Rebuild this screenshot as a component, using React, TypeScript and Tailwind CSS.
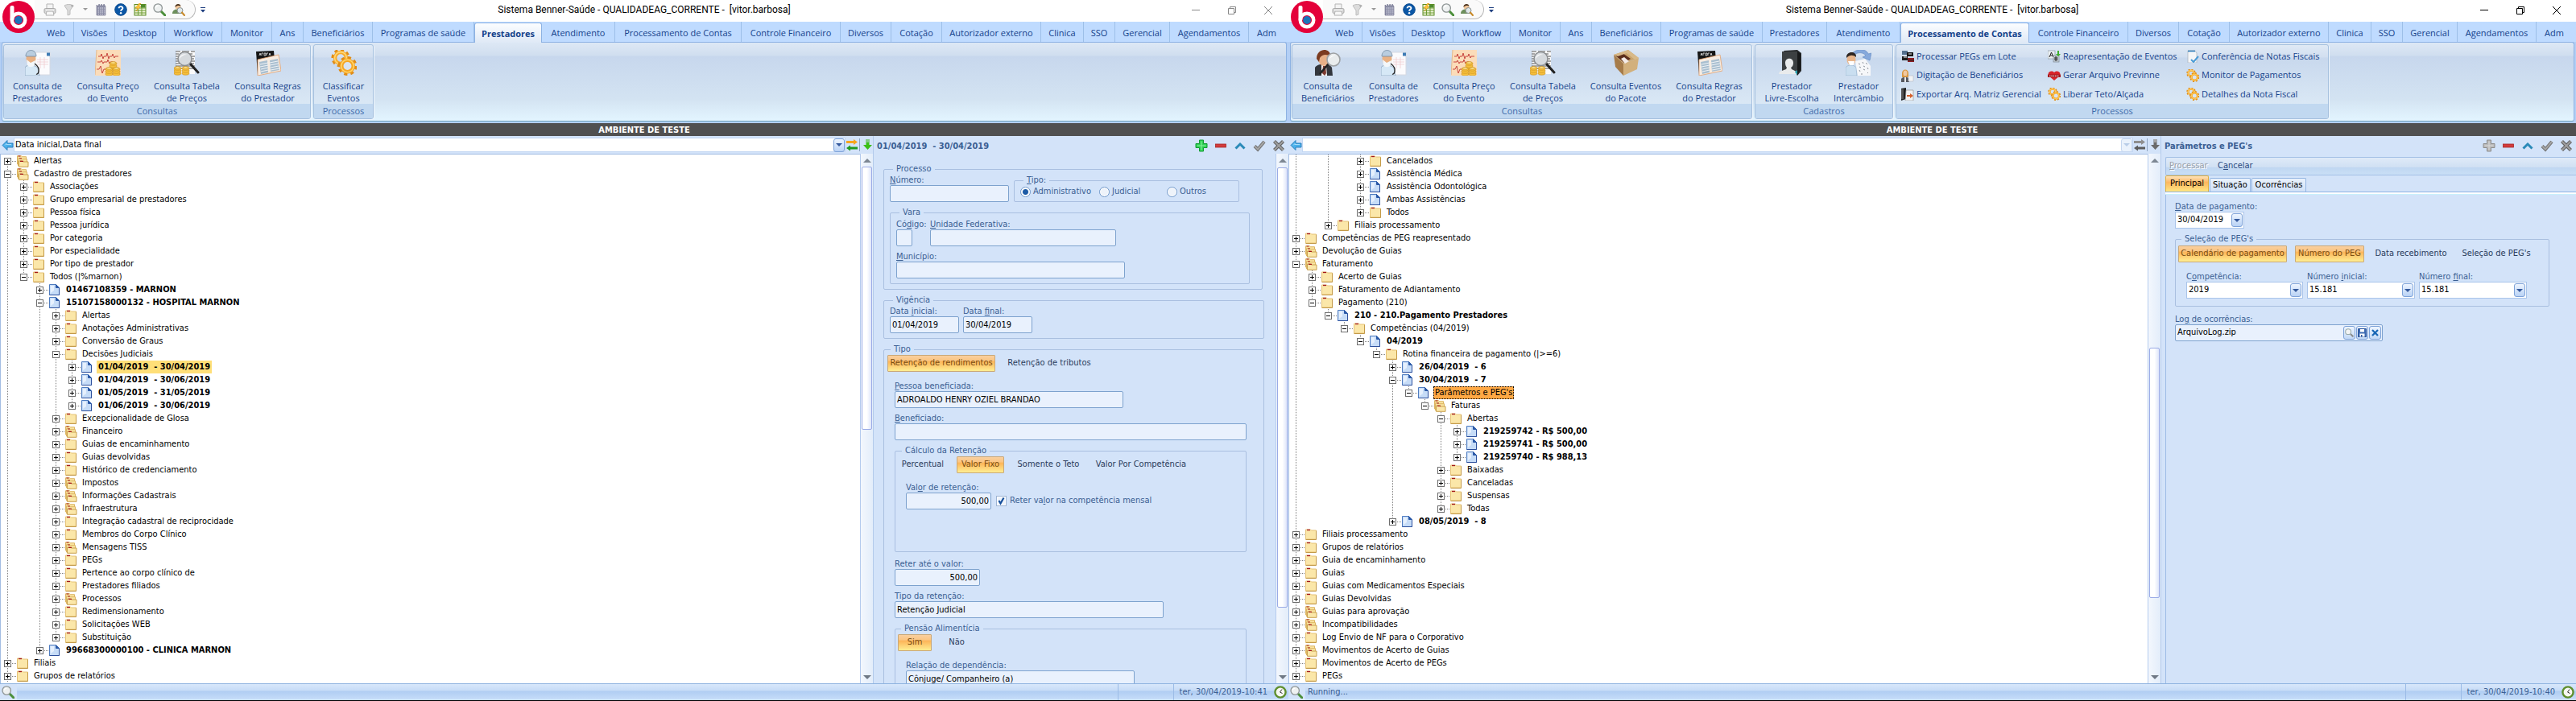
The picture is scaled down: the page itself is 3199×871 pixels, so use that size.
import { useId, type ReactNode } from "react";

const RIBBON_BG =
  "bg-[linear-gradient(to_bottom,#dde8f5_0px,#d0deef_16px,#c7d7ed_17px,#d3e3f2_70px,#e3f5ff_100%)]";
const GROUP_BG =
  "bg-[linear-gradient(to_bottom,#dfe9f5_0px,#d2dff0_15px,#c8d8ed_16px,#dae8f5_74px)]";
const TAHOMA = "font-['DejaVu_Sans_Condensed','DejaVu_Sans',sans-serif]";
const SEGOE = "font-['Open_Sans','Noto_Sans',sans-serif]";

/* ---------- small helpers ---------- */

/* "&" marks the access key of a caption */
function Caption({ text }: { text: string }) {
  const i = text.indexOf("&");
  if (i < 0) return <>{text}</>;
  return (
    <>
      {text.slice(0, i)}
      <u>{text[i + 1]}</u>
      {text.slice(i + 2)}
    </>
  );
}

function Svg({ size = 16, w, h, box, children }: { size?: number; w?: number; h?: number; box?: string; children: ReactNode }) {
  return (
    <svg width={w ?? size} height={h ?? size} viewBox={box ?? `0 0 ${w ?? size} ${h ?? size}`} className="block shrink-0" aria-hidden="true">
      {children}
    </svg>
  );
}

/* ---------- icons ---------- */

function Logo() {
  return (
    <Svg size={40}>
      <circle cx="20" cy="20" r="20" fill="#e4003a" />
      <rect x="9.5" y="6" width="5" height="19" rx="2" fill="#fff" />
      <circle cx="20" cy="24" r="8.3" fill="none" stroke="#fff" strokeWidth="4.4" />
      <circle cx="20" cy="24" r="4.9" fill="#1b74b8" />
    </Svg>
  );
}

const Printer = () => (
  <Svg>
    <path d="M4 7V1h8v6" fill="#f4f4f4" stroke="#b5b5b5" />
    <rect x="1" y="6.5" width="14" height="6" rx="1.5" fill="#d9d9d9" stroke="#aaa" />
    <path d="M4 10h8l1 5H3z" fill="#f7f7f7" stroke="#b0b0b0" />
    <path d="M3 8.5h10" stroke="#fff" />
  </Svg>
);
const Funnel = () => (
  <Svg>
    <path d="M2 3c3-2 8-2 11 0l-4 6v5l-3 1V9z" fill="#dcdcdc" stroke="#bdbdbd" />
    <path d="M10 2l4 1-3 2z" fill="#a9a9a9" />
  </Svg>
);
const Building = () => (
  <Svg>
    <path d="M2 15V2l2 2 1-3 2 3 1-3 2 3 1-3 2 3v11z" fill="#8d8fa8" stroke="#6b6d88" strokeWidth=".6" />
    <path d="M3.5 6h9M3.5 8.5h9M3.5 11h9M3.5 13.5h9" stroke="#dcdde8" strokeDasharray="1.5 1" />
  </Svg>
);
const Help = () => (
  <Svg>
    <circle cx="8" cy="8" r="7.3" fill="#0b57a6" stroke="#0a4a8e" />
    <path d="M5.6 6.3C5.7 3.4 10.6 3.5 10.4 6.2 10.3 7.9 8.1 7.8 8.1 9.8" fill="none" stroke="#fff" strokeWidth="1.9" />
    <circle cx="8.1" cy="12.2" r="1.2" fill="#fff" />
  </Svg>
);
const Sheet = () => (
  <Svg>
    <rect x="1" y="1.5" width="14" height="13.5" fill="#eef5d8" stroke="#5b8a22" />
    <path d="M1 6h14M1 9h14M1 12h14M5.5 2v13M10 2v13" stroke="#6d9a33" />
    <rect x="9" y="2" width="5.5" height="3.5" fill="#4e8b2d" />
    <path d="M7 0L2 6h3L3 10l6-6H6l3-4z" fill="#ffc83a" stroke="#d58a10" strokeWidth=".5" />
  </Svg>
);
const Magnifier = () => (
  <Svg>
    <path d="M10 10l5 5" stroke="#4c8f3a" strokeWidth="3" strokeLinecap="round" />
    <circle cx="6.2" cy="6" r="5.2" fill="#eef1f1" stroke="#8e9494" strokeWidth="1.3" />
    <path d="M3.5 5.5c.3-1.7 1.5-2.4 3-2.3" stroke="#fff" fill="none" strokeWidth="1.2" />
  </Svg>
);
const UserSearch = () => (
  <Svg>
    <path d="M0 13c0-4 3-5.5 6-5.5s6 1.5 6 5.5z" fill="#6d8f5c" />
    <circle cx="7" cy="4.5" r="3.3" fill="#f2c79a" />
    <path d="M3.5 5C3 0 10.5-.5 10.5 4 9 2.5 6 2.5 3.5 5z" fill="#4a3320" />
    <circle cx="9.5" cy="9" r="3.5" fill="#dfe8ea" stroke="#8a8f8f" />
    <path d="M12 11.5l3 3.5" stroke="#c98a2a" strokeWidth="2" strokeLinecap="round" />
  </Svg>
);

const Coins = ({ x, y }: { x: number; y: number }) => (
  <g transform={`translate(${x} ${y})`} stroke="#c98f1d" strokeWidth=".6">
    {[9, 6, 3].map((v) => (
      <ellipse key={v} cx="4.5" cy={v} rx="4.5" ry="2.2" fill="#f6bf3c" />
    ))}
    <ellipse cx="4.5" cy="2" rx="3.3" ry="1.3" fill="#fde28a" />
  </g>
);
const Doctor = () => (
  <Svg size={32}>
    <rect x="12" y="3" width="19" height="28" fill="#fbfbfd" stroke="#d5d9e2" />
    <path d="M15 12h14M15 15h14M15 18h14M19 9v14M24 9v14" stroke="#efc9cc" strokeWidth=".7" />
    <rect x="27" y="3.5" width="4" height="4" fill="#3f7bb5" />
    <path d="M0 32V22c1-4 14-4 16 1l2 9z" fill="#d6e8f6" stroke="#7f99b4" strokeWidth=".7" />
    <ellipse cx="7.5" cy="11" rx="6" ry="8" fill="#e9b183" />
    <path d="M1 8C1-2 14-2 14 8z" fill="#b9cddf" stroke="#6a829b" strokeWidth=".7" />
    <path d="M2 12l5 4 6-3-1 6c-3 3-7 3-9 0z" fill="#f3f7fa" />
    <path d="M12 17c4 3 6 6 5 10-1 4-3 3-3 3" fill="none" stroke="#222" strokeWidth="1.3" />
  </Svg>
);
const Ecg = () => (
  <Svg size={32}>
    <path d="M2 0h30v32H0z" fill="#fbdcb9" />
    <path d="M0 31L2 0" stroke="#e4b98c" />
    <path d="M4 8h3l1-3 2 6 1-3h3l1-4 2 7 1-3h3l1-3 2 5 1-2h4M3 15h4l1-2 2 4 1-2h4l1-3 2 5 1-2h3M2 24h3l2-4 2 9 2-5h5" fill="none" stroke="#c8463f" />
    <Coins x={18} y={14} />
    <Coins x={13} y={21} />
    <Coins x={22} y={21} />
  </Svg>
);
const PriceTable = () => (
  <Svg size={32}>
    <rect x="3" y="1" width="23" height="29" fill="#fafafa" />
    <path d="M2 2h6m2 0h9m2 0h5M2 5h4m3 0h14M2 8h7m2 0h15M2 11h5m2 0h16M2 14h8m2 0h14M2 17h5m2 0h16M2 20h24M2 23h24" stroke="#555" strokeWidth="1" />
    <path d="M20 17l10 11" stroke="#222" strokeWidth="3" strokeLinecap="round" />
    <circle cx="13.5" cy="11" r="8.5" fill="#d6dade" stroke="#8a8d90" strokeWidth="1.5" />
    <path d="M7 11c0-5 6-7 9-5-4 0-7 2-9 5z" fill="#f5f6f7" />
    <Coins x={0} y={20} />
    <Coins x={10} y={20} />
  </Svg>
);
const Rules = () => (
  <Svg size={32}>
    <path d="M1 2l22-1 2 24-22 6z" fill="#151515" />
    <path d="M5 7l1-3 1 3M8 7V4h2M11 7V4h2v3zM14 7V4h2M17 7l1-3 1 3" stroke="#eee" fill="none" strokeWidth=".8" />
    <path d="M3 12l26-6 3 20-29 6z" fill="#f7ece1" stroke="#e2a06c" strokeWidth=".8" />
    <path d="M5 15l10-2 1 15-9 2zM18 13l10-2 2 14-11 2z" fill="#a9bfd0" />
    <path d="M6 18l10-2M6 21l10-2M7 24l9-2M7 27l9-2M18 16l10-2M18 19l11-2M19 22l10-2M19 25l11-2" stroke="#fff" strokeWidth=".8" />
  </Svg>
);
const Gears = ({ size = 32 }: { size?: number }) => (
  <Svg size={size} box="0 0 32 32">
    <circle cx="12" cy="10" r="9.5" fill="none" stroke="#e08c17" strokeWidth="4" strokeDasharray="4 3.4" />
    <circle cx="12" cy="10" r="7" fill="none" stroke="#f6ab2e" strokeWidth="4.5" />
    <circle cx="12" cy="10" r="7.4" fill="none" stroke="#ffd774" strokeWidth="1.6" />
    <circle cx="20.5" cy="20" r="10" fill="none" stroke="#e08c17" strokeWidth="4" strokeDasharray="4 3.85" />
    <circle cx="20.5" cy="20" r="7.3" fill="#d9e4f1" stroke="#f6a623" strokeWidth="4.5" />
    <circle cx="20.5" cy="20" r="7.7" fill="none" stroke="#ffd46a" strokeWidth="1.6" />
  </Svg>
);
const Beneficiary = () => (
  <Svg size={32}>
    <path d="M0 32V22c2-5 18-6 21 0l1 10z" fill="#33363c" />
    <path d="M8 19h6l1 13H8z" fill="#f5f5f5" />
    <path d="M10 20h3l1 9-2 3-3-3z" fill="#7d3a30" />
    <ellipse cx="11" cy="11" rx="7" ry="9" fill="#e7b088" />
    <path d="M2 11C2-3 20-3 19 8c-4-3-10-3-13 2l-1 5z" fill="#7b3b20" />
    <path d="M6 30l11-13" stroke="#222" strokeWidth="2.5" />
    <circle cx="23" cy="12" r="8" fill="#e9eced" stroke="#9da1a4" strokeWidth="1.6" />
    <path d="M18 11c1-4 5-5 8-4-3 0-6 2-8 4z" fill="#fff" />
  </Svg>
);
const BoxIcon = () => (
  <Svg size={32}>
    <path d="M1 6L19 0l13 10-19 7z" fill="#c9a36b" />
    <path d="M1 6l12 11v15L3 21z" fill="#a67c4a" />
    <path d="M13 17l19-7-2 14-17 8z" fill="#d2b07c" />
    <path d="M3 7l9-3 10 7-8 5z" fill="#5d2f1c" />
    <path d="M10 11l4-2 6 5-5 3z" fill="#f4ebe6" />
    <path d="M1 6L19 0l13 10-5 2L17 4 6 8z" fill="#d8b988" />
  </Svg>
);
const DarkFolder = () => (
  <Svg size={32}>
    <path d="M6 1l17-1 5 4v22l-5 6z" fill="#26292b" />
    <path d="M4 2h19v24H4z" fill="#3c4042" />
    <path d="M23 2l4 3v19l-4 7z" fill="#17191a" />
    <path d="M8 16c0-7 10-7 10 0 0 3-1 5-3 6l1 2 6 3v3H0l1-3 8-3 1-2c-1-1-2-3-2-6z" fill="#e9ebec" />
    <path d="M20 27l3-2v6l-2-2z" fill="#2a9fb0" />
  </Svg>
);
const Exchange = () => (
  <Svg size={32}>
    <path d="M6 7C12-3 26-2 28 5l4-1-2 9-9-4 4-2c-3-4-10-5-15 0z" fill="#86a9dc" stroke="#5f86c0" strokeWidth=".6" />
    <path d="M0 32V22c2-4 11-4 13 0l1 10z" fill="#c9def0" stroke="#8eacc8" strokeWidth=".6" />
    <ellipse cx="7" cy="12" rx="5.5" ry="7" fill="#e8b58c" />
    <path d="M1 10C0 1 14 1 13 9 9 6 5 6 1 10z" fill="#2d2522" />
    <path d="M3 14h8l-1 5H5z" fill="#fff" />
    <path d="M12 14l12-3 7 9v12H15z" fill="#f6f7f9" />
    <path d="M16 17l2 1m3-3l1 2m3-1l2 2m-10 3l2 1m3-2l2 1m3 1l1 2m-11 1l1 2m4-3l2 1m3 3l1 1m-9 1l2 0" stroke="#8d939c" />
  </Svg>
);
const Docs = () => (
  <Svg>
    <path d="M1 1h7v5H1z" fill="#54708e" />
    <path d="M7 3h8v5H7z" fill="#151515" />
    <path d="M1 8h7v5H1z" fill="#1d1d1d" />
    <path d="M3 9h4M9 5h4" stroke="#eee" />
    <path d="M8 10h8v5H8z" fill="#8c1f23" />
    <path d="M8 13h8" stroke="#222" />
  </Svg>
);
const Clerk = () => (
  <Svg>
    <path d="M1 5C1-1 9-1 9 5v5H1z" fill="#d9963e" />
    <ellipse cx="5" cy="5" rx="2.5" ry="3.5" fill="#f0c8a0" />
    <path d="M0 16v-4c2-3 8-3 10 0v4z" fill="#55585f" />
    <path d="M4 10h2v6H4z" fill="#e8e8ea" />
    <path d="M9 8h6v7H9z" fill="#f2f3f5" stroke="#b9bcc2" strokeWidth=".6" />
  </Svg>
);
const ExportIcon = () => (
  <Svg>
    <path d="M0 1l6-1v14l-6 2z" fill="#222" />
    <path d="M6 3h9v13H5z" fill="#f3f3f3" stroke="#888" strokeWidth=".6" />
    <path d="M0 2h3v12H0z" fill="#555" />
    <path d="M7 9h4V7l4 3-4 3v-2H7z" fill="#d5602b" />
  </Svg>
);
const Translate = () => (
  <Svg>
    <rect x="0" y="1" width="9" height="10" fill="#e9eef2" stroke="#7f8c98" strokeWidth=".6" />
    <path d="M2 9l2.5-6L7 9M3 7h3" stroke="#222" fill="none" />
    <rect x="7" y="7" width="7" height="8" fill="#c9d2da" stroke="#6b7884" strokeWidth=".6" />
    <path d="M9 9h2.5v4H9zM9 11h3" stroke="#222" fill="none" />
    <path d="M12 1h2v4h2l-3 3-3-3h2z" fill="#3fae29" />
  </Svg>
);
const Heart = () => (
  <Svg>
    <path d="M8 14L1 8C-1 3 5 1 8 4c3-3 9-1 7 4z" fill="#d8232a" />
    <path d="M0 6.5h16v3.5H0z" fill="#a3171d" />
    <path d="M2 8.3h12" stroke="#fff" strokeDasharray="1.5 .8" />
  </Svg>
);
const DocCheck = () => (
  <Svg>
    <path d="M2 1h9l2 3v12H2z" fill="#f4f6f8" stroke="#a9b2bb" strokeWidth=".7" />
    <path d="M2 1.5h9" stroke="#2a7ab8" strokeWidth="1.6" />
    <path d="M6 12l3 3 6-7" stroke="#4a9bd6" strokeWidth="2" fill="none" />
  </Svg>
);

const Folder = () => (
  <Svg w={15} h={14}>
    <path d="M.5 3V1h6l1 1h6v11H.5z" fill="#fbe7a9" stroke="#e6c377" />
    <path d="M2 1.5h4" stroke="#a3161b" strokeWidth="1.3" />
    <path d="M13.5 2.5v11H.5" stroke="#c39a49" fill="none" />
  </Svg>
);
const Folders = () => (
  <Svg w={15} h={15}>
    <path d="M.5 11V.7h5l1 1h5V11z" fill="#f9e3a0" stroke="#dcb562" />
    <path d="M1.5 13V3.7h4l1 1h6V13z" fill="#f9e3a0" stroke="#dcb562" />
    <path d="M2.5 14.3V7h4l1 1h6.5v6.3z" fill="#fbe7a9" stroke="#c9a14e" />
    <path d="M1.5 1h3M3 4h3M4 7.400h4" stroke="#a3161b" strokeWidth="1.2" />
  </Svg>
);
const FileIcon = () => (
  <Svg w={14} h={14}>
    <path d="M.5.5h8l4 4v9H.5z" fill="#c6dcf7" stroke="#4f7cc0" />
    <path d="M8.5.5v4h4z" fill="#2c5aa8" stroke="#2c5aa8" />
    <path d="M12.5 5v8.500H.5" stroke="#2c4f9c" fill="none" />
    <path d="M2 2h4v6L2 11z" fill="#e6f0fd" />
  </Svg>
);
const BackArrow = () => (
  <Svg w={15} h={15}>
    <path d="M1 7.5l6-6v3.500h7v5H7v3.500z" fill="#4cb0ea" stroke="#2379b8" strokeWidth=".9" />
    <path d="M4 7.5l2-2v1h6" stroke="#a6dcfb" fill="none" />
  </Svg>
);
const Swap = ({ off }: { off?: boolean }) => (
  <Svg w={16} h={16}>
    <path d="M1 3h9V1l5 3.500L10 8V6H1z" fill={off ? "#8f8f8f" : "#f7a61c"} />
    <path d="M15 10.500H6v-2L1 12l5 3.500v-2h9z" fill={off ? "#5d5d5d" : "#1f9a1f"} />
  </Svg>
);
const DownArrow = ({ off }: { off?: boolean }) => (
  <Svg w={12} h={16}>
    <path d="M3.5 1h4v7H11l-5.500 6L0 8h3.500z" fill={off ? "#6b6b6b" : "#3bbf17"} />
    <path d="M4 1h3v4H4z" fill={off ? "#a5a5a5" : "#86c98a"} />
  </Svg>
);
const Plus = ({ off }: { off?: boolean }) => (
  <Svg>
    <path d="M5.5 1h5v4.500H15v5h-4.500V15h-5v-4.500H1v-5h4.500z" fill={off ? "#b9b9b9" : "#2fd153"} stroke={off ? "#8e8e8e" : "#139c35"} />
    <path d="M8 2.5v11M2.5 8h11" stroke={off ? "#d9d9d9" : "#8cf0a0"} />
  </Svg>
);
const Minus = () => (
  <Svg>
    <rect x="1.5" y="6" width="13" height="4" fill="#d33c3c" stroke="#a82626" strokeWidth=".8" />
  </Svg>
);
const Up = () => (
  <Svg>
    <path d="M2.5 11.5L8 6l5.500 5.500" fill="none" stroke="#2a8ab8" strokeWidth="3" />
  </Svg>
);
const Check = () => (
  <Svg>
    <path d="M2 8.5l4 4 8-9.500" fill="none" stroke="#6f6f6f" strokeWidth="4" />
    <path d="M2 8.5l4 4 8-9.500" fill="none" stroke="#a5a5a5" strokeWidth="2" />
  </Svg>
);
const Cross = () => (
  <Svg>
    <path d="M2.5 2.5l11 11M13.5 2.5l-11 11" stroke="#606060" strokeWidth="4.2" />
    <path d="M2.5 2.5l11 11M13.5 2.5l-11 11" stroke="#a0a0a0" strokeWidth="1.8" />
  </Svg>
);
const Clock = () => (
  <Svg w={16} h={16}>
    <circle cx="8" cy="8" r="6.6" fill="#f7f8f2" stroke="#5f8f2e" strokeWidth="2.4" />
    <path d="M10 4.5L7.5 8l3 1.500" stroke="#333" fill="none" />
  </Svg>
);
const Caret = ({ color }: { color: string }) => (
  <Svg w={8} h={4}>
    <path d="M0 0h8L4 4z" fill={color} />
  </Svg>
);

/* ---------- title bar, tabs, ribbon ---------- */

function TitleBar({ active }: { active: boolean }) {
  const ink = active ? "#000" : "#888";
  const tools: [string, ReactNode][] = [
    ["Planilha", <Sheet key="s" />],
    ["Pesquisar", <Magnifier key="m" />],
    ["Usuário", <UserSearch key="u" />],
  ];
  return (
    <header className="grid h-[27px] shrink-0 grid-cols-[1fr_auto_1fr] items-start bg-white">
      <div className="flex pl-[43px]">
        <div className="flex h-6 items-center gap-2 rounded-r-full border border-t-0 border-l-0 border-[#b9b9b9] bg-[#fafafa] pr-3 pl-[11px]">
          <button aria-label="Imprimir"><Printer /></button>
          <button aria-label="Filtrar"><Funnel /></button>
          <button aria-label="Mais filtros" className="flex w-2 justify-center"><Svg w={6} h={3}><path d="M0 0h6L3 3z" fill="#999" /></Svg></button>
          <button aria-label="Empresa"><Building /></button>
          <button aria-label="Ajuda"><Help /></button>
          {tools.map(([n, i]) => (
            <button key={n} aria-label={n}>{i}</button>
          ))}
        </div>
        <button aria-label="Personalizar" className="mt-2 ml-1.5 h-2">
          <Svg w={6} h={7}><path d="M0 .5h6" stroke="#1f3f80" /><path d="M0 3h6L3 6.500z" fill="#1f3f80" /></Svg>
        </button>
      </div>
      <h1 className="font-['Roboto',sans-serif] text-xs leading-6 whitespace-pre text-black">
        Sistema Benner-Saúde - QUALIDADEAG_CORRENTE -  [vitor.barbosa]
      </h1>
      <div className={`flex justify-end gap-[35px] pt-2 ${active ? "pr-[19px]" : "pr-5"}`}>
        <button aria-label="Minimizar"><Svg w={10} h={10}><path d="M0 4.500h10" stroke={ink} /></Svg></button>
        <button aria-label="Restaurar"><Svg w={10} h={10}><path d="M.5 2.500h7v7h-7zM2.500 2.500v-2h7v7h-2" fill="none" stroke={ink} /></Svg></button>
        <button aria-label="Fechar"><Svg w={10} h={10}><path d="M0 0l10 10M10 0L0 10" stroke={ink} /></Svg></button>
      </div>
    </header>
  );
}

const TABS: [string, string][] = [
  ["Web", "w-[44px]"],
  ["Visões", "w-[51px]"],
  ["Desktop", "w-[62px]"],
  ["Workflow", "w-[71px]"],
  ["Monitor", "w-[62px]"],
  ["Ans", "w-[39px]"],
  ["Beneficiários", "w-[86px]"],
  ["Programas de saúde", "w-[126px]"],
  ["Prestadores", "w-[80px]"],
  ["Atendimento", "w-[91px]"],
  ["Processamento de Contas", "w-[160px]"],
  ["Controle Financeiro", "w-[123px]"],
  ["Diversos", "w-[63px]"],
  ["Cotação", "w-[63px]"],
  ["Autorizador externo", "w-[123px]"],
  ["Clinica", "w-[53px]"],
  ["SSO", "w-[39px]"],
  ["Gerencial", "w-[68px]"],
  ["Agendamentos", "w-[98px]"],
  ["Adm", "w-[44px]"],
];
const FIRST_TABS: Record<string, string> = { Prestadores: "w-[84px]", "Processamento de Contas": "w-[157px]" };

function Tabs({ current }: { current: string }) {
  return (
    <nav className={`${SEGOE} flex h-[25px] shrink-0 bg-[#bfdbff] pl-12 text-[11px] text-[#15428b]`}>
      {TABS.map(([name, w]) => {
        const on = name === current;
        const width = current === "Prestadores" ? (FIRST_TABS[name] ?? w) : w;
        return (
          <button
            key={name}
            className={`${width} whitespace-nowrap ${
              on
                ? "relative mt-px h-[25px] rounded-t-[3px] border border-b-0 border-[#8db2e3] bg-[linear-gradient(to_bottom,#fbfdff,#dfe9f6)] pt-0.5 font-bold"
                : "border-r border-[#9dbfe8] pt-1 last:border-r-0"
            }`}
          >
            {name}
          </button>
        );
      })}
    </nav>
  );
}

function RibbonGroup({ title, children }: { title: string; children: ReactNode }) {
  return (
    <section className={`flex h-[93px] flex-col overflow-hidden rounded-[3px] border border-[#a5c0de] shadow-[1px_1px_0_#eef5fc] ${GROUP_BG}`}>
      <div className="flex min-h-0 flex-1 px-0.5 pt-0.5">{children}</div>
      <h2 className="bg-[#c1d8f0] text-center text-[11px] leading-[18px] text-[#3e6aaa]">{title}</h2>
    </section>
  );
}

function BigButton({ icon, lines, width }: { icon: ReactNode; lines: [string, string]; width: string }) {
  return (
    <button className={`${width} flex flex-col items-center pt-1 text-[11px] leading-[15px] whitespace-nowrap text-[#15428b]`}>
      {icon}
      <span className="mt-[5px]">
        {lines[0]}
        <br />
        {lines[1]}
      </span>
    </button>
  );
}

const BIG = {
  doctor: <BigButton icon={<Doctor />} lines={["Consulta de", "Prestadores"]} width="w-[79px]" />,
  price: <BigButton icon={<Ecg />} lines={["Consulta Preço", "do Evento"]} width="w-[96px]" />,
  table: <BigButton icon={<PriceTable />} lines={["Consulta Tabela", "de Preços"]} width="w-[100px]" />,
  rules: <BigButton icon={<Rules />} lines={["Consulta Regras", "do Prestador"]} width="w-[101px]" />,
};

function SmallButton({ icon, text }: { icon: ReactNode; text: string }) {
  return (
    <button className="flex h-6 items-center gap-[3px] text-[11px] whitespace-nowrap text-[#15428b]">
      {icon}
      {text}
    </button>
  );
}

function Ribbon({ children }: { children: ReactNode }) {
  return (
    <div className={`${SEGOE} shrink-0 bg-[#b3cff5] px-0.5 pb-0.5`}>
      <div className={`flex gap-[3px] rounded-[3px] border border-[#8db2e3] border-b-[#6ba0b8] p-px py-0.5 ${RIBBON_BG}`}>{children}</div>
    </div>
  );
}

/* ---------- tree ---------- */

type Kind = "d" | "D" | "f";
/* level, expanded, icon kind, text, bold, highlight */
type Row = [number, boolean, Kind, string, boolean?, ("mark" | "focus")?];

const LEFT_TREE: Row[] = [
  [0, false, "D", "Alertas"],
  [0, true, "D", "Cadastro de prestadores"],
  [1, false, "d", "Associações"],
  [1, false, "d", "Grupo empresarial de prestadores"],
  [1, false, "d", "Pessoa física"],
  [1, false, "d", "Pessoa jurídica"],
  [1, false, "d", "Por categoria"],
  [1, false, "d", "Por especialidade"],
  [1, false, "d", "Por tipo de prestador"],
  [1, true, "d", "Todos (|%marnon)"],
  [2, false, "f", "01467108359 - MARNON", true],
  [2, true, "f", "15107158000132 - HOSPITAL MARNON", true],
  [3, false, "d", "Alertas"],
  [3, false, "d", "Anotações Administrativas"],
  [3, false, "d", "Conversão de Graus"],
  [3, true, "d", "Decisões Judiciais"],
  [4, false, "f", "01/04/2019  - 30/04/2019", true, "mark"],
  [4, false, "f", "01/04/2019  - 30/06/2019", true],
  [4, false, "f", "01/05/2019  - 31/05/2019", true],
  [4, false, "f", "01/06/2019  - 30/06/2019", true],
  [3, false, "d", "Excepcionalidade de Glosa"],
  [3, false, "D", "Financeiro"],
  [3, false, "d", "Guias de encaminhamento"],
  [3, false, "d", "Guias devolvidas"],
  [3, false, "d", "Histórico de credenciamento"],
  [3, false, "D", "Impostos"],
  [3, false, "D", "Informações Cadastrais"],
  [3, false, "D", "Infraestrutura"],
  [3, false, "d", "Integração cadastral de reciprocidade"],
  [3, false, "d", "Membros do Corpo Clínico"],
  [3, false, "D", "Mensagens TISS"],
  [3, false, "d", "PEGs"],
  [3, false, "d", "Pertence ao corpo clínico de"],
  [3, false, "d", "Prestadores filiados"],
  [3, false, "D", "Processos"],
  [3, false, "d", "Redimensionamento"],
  [3, false, "d", "Solicitações WEB"],
  [3, false, "d", "Substituição"],
  [2, false, "f", "99668300000100 - CLINICA MARNON", true],
  [0, false, "d", "Filiais"],
  [0, false, "d", "Grupos de relatórios"],
];

const RIGHT_TREE: Row[] = [
  [4, false, "d", "Cancelados"],
  [4, false, "f", "Assistência Médica"],
  [4, false, "f", "Assistência Odontológica"],
  [4, false, "f", "Ambas Assistências"],
  [4, false, "d", "Todos"],
  [2, false, "d", "Filiais processamento"],
  [0, false, "d", "Competências de PEG reapresentado"],
  [0, false, "D", "Devolução de Guias"],
  [0, true, "D", "Faturamento"],
  [1, false, "d", "Acerto de Guias"],
  [1, false, "d", "Faturamento de Adiantamento"],
  [1, true, "d", "Pagamento (210)"],
  [2, true, "f", "210 - 210.Pagamento Prestadores", true],
  [3, true, "d", "Competências (04/2019)"],
  [4, true, "f", "04/2019", true],
  [5, true, "d", "Rotina financeira de pagamento (|>=6)"],
  [6, false, "f", "26/04/2019  - 6", true],
  [6, true, "f", "30/04/2019  - 7", true],
  [7, true, "f", "Parâmetros e PEG's", false, "focus"],
  [8, true, "D", "Faturas"],
  [9, true, "d", "Abertas"],
  [10, false, "f", "219259742 - R$ 500,00", true],
  [10, false, "f", "219259741 - R$ 500,00", true],
  [10, false, "f", "219259740 - R$ 988,13", true],
  [9, false, "d", "Baixadas"],
  [9, false, "d", "Canceladas"],
  [9, false, "d", "Suspensas"],
  [9, false, "d", "Todas"],
  [6, false, "f", "08/05/2019  - 8", true],
  [0, false, "d", "Filiais processamento"],
  [0, false, "d", "Grupos de relatórios"],
  [0, false, "d", "Guia de encaminhamento"],
  [0, false, "d", "Guias"],
  [0, false, "d", "Guias com Medicamentos Especiais"],
  [0, false, "d", "Guias Devolvidas"],
  [0, false, "D", "Guias para aprovação"],
  [0, false, "D", "Incompatibilidades"],
  [0, false, "d", "Log Envio de NF para o Corporativo"],
  [0, false, "D", "Movimentos de Acerto de Guias"],
  [0, false, "d", "Movimentos de Acerto de PEGs"],
  [0, false, "d", "PEGs"],
];

/* true when another node of this level follows inside the same branch */
function continues(rows: Row[], from: number, level: number) {
  for (let i = from + 1; i < rows.length; i++) {
    if (rows[i][0] < level) return false;
    if (rows[i][0] === level) return true;
  }
  return level === 0;
}

const DOT = { stroke: "#808080", strokeDasharray: "1 1", fill: "none" };

function Tree({ rows }: { rows: Row[] }) {
  return (
    <ul role="tree" className="min-w-0 flex-1 overflow-hidden border-t border-l border-[#a3bde3] bg-white text-[11px] text-black">
      {rows.map(([level, open, kind, text, bold, hl], i) => (
        <li key={i} role="treeitem" aria-expanded={open} className="flex h-4 items-center">
          {Array.from({ length: level }, (_, c) => (
            <Svg key={c} w={20} h={16}>
              {continues(rows, i, c) && <path d="M8.5 0v16" {...DOT} />}
            </Svg>
          ))}
          <button aria-label={open ? "Recolher" : "Expandir"}>
            <Svg w={20} h={16}>
              {(i > 0 || level > 0) && <path d="M8.5 0v4" {...DOT} />}
              {continues(rows, i, level) && <path d="M8.5 12v4" {...DOT} />}
              <path d="M14 8.5h6" {...DOT} />
              <rect x="4.5" y="4.5" width="8" height="8" fill="#fff" stroke="#6d6d6d" />
              <path d={open ? "M6 8.5h5" : "M6 8.5h5M8.5 6v5"} stroke="#000" />
            </Svg>
          </button>
          <span className="w-[19px] shrink-0">{kind === "d" ? <Folder /> : kind === "D" ? <Folders /> : <FileIcon />}</span>
          <span
            className={`px-0.5 whitespace-pre ${bold ? "font-bold" : ""} ${
              hl === "mark" ? "bg-[#ffdf78] leading-4" : hl === "focus" ? "bg-[#ffa844] leading-4 outline-1 -outline-offset-1 outline-dotted outline-black" : "leading-4"
            }`}
          >
            {text}
          </span>
        </li>
      ))}
    </ul>
  );
}

function Scrollbar({ before, thumb, after }: { before: number; thumb: number; after: number }) {
  return (
    <div className="flex w-4 shrink-0 flex-col border-l border-[#b5cbee] bg-[linear-gradient(to_right,#f3f7fd,#e3edfa)] px-px">
      <div className="flex h-4 shrink-0 items-center justify-center">
        <Svg w={10} h={5}><path d="M0 5h10L5 0z" fill="#7d8793" /></Svg>
      </div>
      <div style={{ flexGrow: before }} />
      <div style={{ flexGrow: thumb }} className="rounded-[2px] border border-[#9aabe6] bg-[linear-gradient(to_right,#fff_50%,#dfe6fa)]" />
      <div style={{ flexGrow: after }} />
      <div className="flex h-4 shrink-0 items-center justify-center">
        <Svg w={10} h={5}><path d="M0 0h10L5 5z" fill="#6f7985" /></Svg>
      </div>
    </div>
  );
}

/* ---------- form controls ---------- */

const BOX = "h-[21px] w-full rounded-[2px] border border-[#7da2ce] bg-[#e9f1fd] px-[2px] text-[11px] text-black outline-none";

function Field({ label, width, value = "", right, ml = "" }: { label: string; width: string; value?: string; right?: boolean; ml?: string }) {
  const id = useId();
  return (
    <div className={`${width} ${ml} shrink-0`}>
      <label htmlFor={id} className="block h-[13px] leading-[13px] whitespace-nowrap">
        <Caption text={label} />
      </label>
      <input id={id} defaultValue={value} className={`${BOX} block ${right ? "text-right" : ""}`} />
    </div>
  );
}

const DropFace = ({ off }: { off?: boolean }) => (
  <span
    className={`flex h-[17px] w-[14px] items-center justify-center rounded-[3px] border ${
      off ? "border-[#c5d7f0] bg-[#eaf2fc]" : "border-[#7da2d8] bg-[linear-gradient(to_bottom,#eef5ff,#b9d2f5)]"
    }`}
  >
    <Caret color={off ? "#b9cde8" : "#34599c"} />
  </span>
);

function Combo({ label, width, value, date }: { label: string; width: string; value: string; date?: boolean }) {
  const id = useId();
  return (
    <div className={`${width} shrink-0`}>
      <label htmlFor={id} className="block h-[13px] leading-[13px] whitespace-nowrap">
        <Caption text={label} />
      </label>
      {date ? (
        <div className="flex h-[21px] items-center border border-[#a9c4ea] bg-white pr-px">
          <input id={id} defaultValue={value} className="w-0 min-w-0 flex-1 bg-transparent px-[2px] text-black outline-none" />
          <button type="button" aria-label="Abrir calendário"><DropFace /></button>
        </div>
      ) : (
        <div className="relative">
          <select id={id} className="h-[21px] w-full appearance-none border border-[#a9c4ea] bg-white px-[2px] text-black outline-none">
            <option>{value}</option>
          </select>
          <span className="pointer-events-none absolute top-0.5 right-0.5"><DropFace /></span>
        </div>
      )}
    </div>
  );
}

function Box({ title, className, children }: { title: string; className: string; children: ReactNode }) {
  return (
    <fieldset className={`min-w-0 rounded-[2px] border border-[#a9bfe0] ${className}`}>
      <legend className="ml-1 h-[14px] px-1 leading-[14px] whitespace-nowrap">
        <Caption text={title} />
      </legend>
      {children}
    </fieldset>
  );
}

function Toggle({ on, width, children }: { on?: boolean; width: string; children: ReactNode }) {
  return (
    <button
      type="button"
      aria-pressed={!!on}
      className={`${width} h-[21px] shrink-0 whitespace-nowrap ${
        on
          ? "rounded-[1px] border border-[#c9a878] bg-[linear-gradient(to_bottom,#f9cf9f_0%,#fbc684_30%,#fdb65a_40%,#ffee92_100%)] text-[#7a4d12]"
          : "text-[#2b3c5c]"
      }`}
    >
      {children}
    </button>
  );
}

function Radio({ label, checked, width }: { label: string; checked?: boolean; width: string }) {
  return (
    <label className={`${width} flex h-[14px] items-center gap-[3px] whitespace-nowrap`}>
      <input
        type="radio"
        name="tipo-processo"
        defaultChecked={checked}
        className="size-[13px] shrink-0 appearance-none rounded-full border border-[#6f97c9] bg-[#eef3fa] shadow-[inset_0_0_0_1px_#fff] checked:bg-[radial-gradient(circle,#1d5ba6_0_3px,#f3f7fc_4px)]"
      />
      {label}
    </label>
  );
}

/* ---------- panes ---------- */

function AddressBar({ value, off }: { value: string; off?: boolean }) {
  return (
    <div className="flex h-[22px] items-center bg-[#d3e3f9] pl-0.5">
      <button aria-label="Voltar"><BackArrow /></button>
      <div className="flex h-[18px] min-w-0 flex-1 items-center border border-[#c3d7f3] bg-white">
        <input aria-label="Filtro" defaultValue={value} className="min-w-0 flex-1 px-px text-[11px] text-black outline-none" />
        <button aria-label="Abrir lista"><DropFace off={off} /></button>
      </div>
      <button aria-label="Alternar"><Swap off={off} /></button>
      <span className="mr-1 ml-px h-4 w-px bg-[#8ea4c2]" />
      <button aria-label="Ordenar"><DownArrow off={off} /></button>
    </div>
  );
}

function PaneHeader({ title, off }: { title: string; off?: boolean }) {
  return (
    <div className="flex h-[22px] shrink-0 items-center pr-1 pl-1">
      <h2 className="flex-1 pt-1 text-[11px] font-bold whitespace-pre text-[#3b5f93]">{title}</h2>
      <div className="flex gap-2 pt-0.5">
        <button aria-label="Novo"><Plus off={off} /></button>
        <button aria-label="Excluir"><Minus /></button>
        <button aria-label="Subir"><Up /></button>
        <button aria-label="Confirmar"><Check /></button>
        <button aria-label="Cancelar edição"><Cross /></button>
      </div>
    </div>
  );
}

function DecisionForm() {
  return (
    <div className="flex min-h-0 flex-1">
      <form className="min-w-0 flex-1 overflow-hidden pt-3 pr-[14px] pl-3">
        <Box title="Processo" className="mr-0.5 pr-[15px] pb-1.5 pl-[7px]">
          <div className="flex gap-1.5">
            <Field label="&Número:" width="w-[148px]" />
            <Box title="&Tipo:" className="w-[280px] pb-1 pl-[7px]">
              <div className="flex">
                <Radio label="Administrativo" checked width="w-[98px]" />
                <Radio label="Judicial" width="w-[84px]" />
                <Radio label="Outros" width="w-[80px]" />
              </div>
            </Box>
          </div>
          <Box title="Vara" className="mt-1.5 pt-px pb-1.5 pl-[7px]">
            <div className="flex">
              <Field label="Có&digo:" width="w-5" />
              <Field label="&Unidade Federativa:" width="w-[231px]" ml="ml-[22px]" />
            </div>
            <div className="mt-1.5">
              <Field label="&Município:" width="w-[284px]" />
            </div>
          </Box>
        </Box>
        <Box title="Vigência" className="mt-1.5 pb-1.5 pl-[7px]">
          <div className="flex gap-[5px]">
            <Field label="Data &inicial:" width="w-[86px]" value="01/04/2019" />
            <Field label="Data &final:" width="w-[86px]" value="30/04/2019" />
          </div>
        </Box>
        <Box title="Tipo" className="mt-1.5 pr-[21px] pb-1.5 pl-1">
          <div className="flex gap-1.5">
            <Toggle on width="w-[134px]">Retenção de rendimentos</Toggle>
            <Toggle width="w-[122px]">Retenção de tributos</Toggle>
          </div>
          <div className="mt-[11px] ml-[9px] flex flex-col gap-1.5">
            <Field label="&Pessoa beneficiada:" width="w-[284px]" value="ADROALDO HENRY OZIEL BRANDAO" />
            <Field label="&Beneficiado:" width="w-full" />
            <Box title="Cálculo da Retenção" className="pb-[52px] pl-1">
              <div className="flex gap-3">
                <Toggle width="w-[60px]">Percentual</Toggle>
                <Toggle on width="w-[59px]">Valor Fixo</Toggle>
                <Toggle width="w-[86px]">Somente o Teto</Toggle>
                <Toggle width="w-[120px]">Valor Por Competência</Toggle>
              </div>
              <div className="mt-[11px] ml-[9px] flex items-end gap-1.5">
                <Field label="Val&or de retenção:" width="w-[106px]" value="500,00" right />
                <label className="flex h-[21px] items-center gap-1 whitespace-nowrap">
                  <span className="relative size-[13px]">
                    <input type="checkbox" defaultChecked className="peer block size-[13px] appearance-none border border-[#9db4d4] bg-[#eef4fc] shadow-[inset_0_0_0_1px_#fff]" />
                    <span className="pointer-events-none absolute top-0 left-0 hidden peer-checked:block">
                      <Svg size={13}><path d="M3.5 6l2 3.500 4-7" stroke="#17509c" strokeWidth="2.2" fill="none" /></Svg>
                    </span>
                  </span>
                  <span><Caption text="Reter va&lor na competência mensal" /></span>
                </label>
              </div>
            </Box>
            <div className="pt-0.5">
              <Field label="Reter até o valor:" width="w-[106px]" value="500,00" right />
            </div>
            <Field label="Tipo da retenção:" width="w-[334px]" value="Retenção Judicial" />
            <Box title="Pensão Alimentícia" className="pb-1.5 pl-[3px]">
              <div className="flex gap-2">
                <Toggle on width="w-[42px]">Sim</Toggle>
                <Toggle width="w-[46px]">Não</Toggle>
              </div>
              <div className="mt-[11px] ml-[10px]">
                <Field label="Relação de dependência:" width="w-[284px]" value="Cônjuge/ Companheiro (a)" />
              </div>
            </Box>
          </div>
        </Box>
      </form>
      <Scrollbar before={1} thumb={545} after={78} />
    </div>
  );
}

function FileButton({ name, children }: { name: string; children: ReactNode }) {
  return (
    <button
      type="button"
      aria-label={name}
      className="flex h-[17px] w-[15px] items-center justify-center rounded-[3px] border border-[#7da2d8] bg-[linear-gradient(to_bottom,#eef5ff,#c3d9f6)]"
    >
      {children}
    </button>
  );
}

function ParametersForm() {
  const logId = useId();
  return (
    <div className="flex min-h-0 flex-1 flex-col pt-1 pl-[5px]">
      <div className="flex h-[23px] shrink-0 items-center rounded-l-[2px] border border-r-0 border-[#a3c0e6] bg-[linear-gradient(to_bottom,#dfeaf8_0%,#d0e0f3_55%,#bfd6f1_56%,#c9dff6_100%)] pl-1">
        <button disabled className="w-[60px] text-left text-[#9a9fa8] [text-shadow:1px_1px_0_#fff]"><Caption text="&Processar" /></button>
        <button className="text-[#2b4a80]"><Caption text="C&ancelar" /></button>
      </div>
      <div role="tablist" className="flex h-5 shrink-0 items-end gap-px text-black">
        <button role="tab" aria-selected="true" className="h-5 w-[54px] rounded-t-[2px] border border-b-0 border-[#e0b040] bg-[linear-gradient(to_bottom,#fde3bd_0%,#fdb75f_40%,#ffe682_100%)]">Principal</button>
        <button role="tab" className="h-[17px] w-[51px] rounded-t-[2px] border border-b-0 border-[#93b5e2] bg-[linear-gradient(to_bottom,#eaf2fc,#d0e1f7)]">Situação</button>
        <button role="tab" className="h-[17px] w-[68px] rounded-t-[2px] border border-b-0 border-[#93b5e2] bg-[linear-gradient(to_bottom,#eaf2fc,#d0e1f7)]">Ocorrências</button>
      </div>
      <div className="h-1 shrink-0 border-t border-b border-t-[#8db2e3] border-b-[#c9f0fb] bg-white" />
      <form className="min-h-0 flex-1 border-l border-[#9dbce6] pt-2 pr-[33px] pl-[11px]">
        <Combo label="&Data de pagamento:" width="w-[86px]" value="30/04/2019" date />
        <Box title="Seleção de PEG's" className="mt-1.5 pt-px pb-[9px] pl-[3px]">
          <div className="flex gap-2.5">
            <Toggle on width="w-[135px]">Calendário de pagamento</Toggle>
            <Toggle on width="w-[86px]">Número do PEG</Toggle>
            <Toggle width="w-[96px]">Data recebimento</Toggle>
            <Toggle width="w-[96px]">Seleção de PEG's</Toggle>
          </div>
          <div className="mt-[11px] ml-2.5 flex gap-[5px]">
            <Combo label="C&ompetência:" width="w-[145px]" value="2019" />
            <Combo label="Número &inicial:" width="w-[134px]" value="15.181" />
            <Combo label="Número &final:" width="w-[134px]" value="15.181" />
          </div>
        </Box>
        <div className="mt-[9px] w-[258px]">
          <label htmlFor={logId} className="block h-[13px] leading-[13px]"><Caption text="Lo&g de ocorrências:" /></label>
          <div className="flex h-[21px] items-center gap-px rounded-[2px] border border-[#7da2ce] bg-[#e9f1fd] pr-px">
            <input id={logId} defaultValue="ArquivoLog.zip" className="min-w-0 flex-1 bg-transparent px-[2px] text-black outline-none" />
            <FileButton name="Visualizar"><Svg w={11} h={11} box="0 0 16 16"><path d="M10 10l5 5" stroke="#8b8b8b" strokeWidth="3" /><circle cx="6" cy="6" r="5" fill="#f2f4f5" stroke="#9aa" strokeWidth="1.5" /></Svg></FileButton>
            <FileButton name="Salvar"><Svg w={11} h={11}><path d="M.5.5h10v10H.5z" fill="#3f6cb3" stroke="#2a549b" /><path d="M3 1h5v3.500H3zM2.500 6.500h6v4h-6z" fill="#fff" /><path d="M4 8h1.500v2.500H4z" fill="#2a549b" /></Svg></FileButton>
            <FileButton name="Remover"><Svg w={9} h={9}><path d="M1 1l7 7M8 1L1 8" stroke="#1766b5" strokeWidth="2.2" /></Svg></FileButton>
          </div>
        </div>
      </form>
    </div>
  );
}

function StatusBar({ message, clock }: { message: string; clock: string }) {
  return (
    <footer className="flex h-[22px] shrink-0 border-t border-b border-t-[#8fb3e0] border-b-black bg-[linear-gradient(to_bottom,#d8e7fb_0%,#c6dbf7_40%,#b0cdf3_45%,#c8def9_100%)] text-[11px] text-[#3b5f93]">
      <span className="flex w-[21px] items-center bg-[#d3e3f9] pl-0.5"><Magnifier /></span>
      <span className="flex-1 pl-[3px] leading-5">{message}</span>
      <span className="w-[69px] border-l border-[#9bbbe6]" />
      <span className="w-[123px] border-l border-[#9bbbe6] pr-1.5 text-right leading-5 whitespace-nowrap">{clock}</span>
      <span className="flex w-5 items-center justify-center"><Clock /></span>
    </footer>
  );
}

interface WindowProps {
  tab: string;
  active: boolean;
  ribbon: ReactNode;
  filter: string;
  rows: Row[];
  scroll: [number, number, number];
  heading: string;
  form: ReactNode;
  message: string;
  clock: string;
}

function AppWindow({ tab, active, ribbon, filter, rows, scroll, heading, form, message, clock }: WindowProps) {
  return (
    <main className={`${TAHOMA} relative flex min-h-0 min-w-0 flex-col overflow-hidden text-[11px]`}>
      <TitleBar active={active} />
      <Tabs current={tab} />
      <Ribbon>{ribbon}</Ribbon>
      <button aria-label="Menu Benner" className="absolute top-px left-[3px]"><Logo /></button>
      <div className="h-4 shrink-0 bg-[#505050] text-center text-[11px] leading-[17px] font-bold text-white">AMBIENTE DE TESTE</div>
      <div className="flex min-h-0 flex-1">
        <div className="flex min-w-0 flex-1 flex-col">
          <AddressBar value={filter} off={active} />
          <div className="flex min-h-0 flex-1">
            <Tree rows={rows} />
            <Scrollbar before={scroll[0]} thumb={scroll[1]} after={scroll[2]} />
          </div>
        </div>
        <div className="flex w-[516px] shrink-0 flex-col border-l border-[#b3caeb] bg-[#d3e3f9] text-[#3b5f93]">
          <PaneHeader title={heading} off={active} />
          {form}
        </div>
      </div>
      <StatusBar message={message} clock={clock} />
    </main>
  );
}

export default function App() {
  return (
    <div className="grid h-screen grid-cols-[1600fr_1599fr] grid-rows-1 overflow-hidden">
      <AppWindow
        tab="Prestadores"
        active={false}
        filter="Data inicial,Data final"
        rows={LEFT_TREE}
        scroll={[0, 326, 299]}
        heading="01/04/2019  - 30/04/2019"
        form={<DecisionForm />}
        message=""
        clock="ter, 30/04/2019-10:41"
        ribbon={
          <>
            <RibbonGroup title="Consultas">
              {BIG.doctor}
              {BIG.price}
              {BIG.table}
              {BIG.rules}
            </RibbonGroup>
            <RibbonGroup title="Processos">
              <BigButton icon={<Gears />} lines={["Classificar", "Eventos"]} width="w-[69px]" />
            </RibbonGroup>
          </>
        }
      />
      <AppWindow
        tab="Processamento de Contas"
        active
        filter=""
        rows={RIGHT_TREE}
        scroll={[225, 310, 90]}
        heading="Parâmetros e PEG's"
        form={<ParametersForm />}
        message="Running..."
        clock="ter, 30/04/2019-10:40"
        ribbon={
          <>
            <RibbonGroup title="Consultas">
              <BigButton icon={<Beneficiary />} lines={["Consulta de", "Beneficiários"]} width="w-[84px]" />
              {BIG.doctor}
              {BIG.price}
              {BIG.table}
              <BigButton icon={<BoxIcon />} lines={["Consulta Eventos", "do Pacote"]} width="w-[106px]" />
              {BIG.rules}
            </RibbonGroup>
            <RibbonGroup title="Cadastros">
              <BigButton icon={<DarkFolder />} lines={["Prestador", "Livre-Escolha"]} width="w-[86px]" />
              <BigButton icon={<Exchange />} lines={["Prestador", "Intercâmbio"]} width="w-[80px]" />
            </RibbonGroup>
            <RibbonGroup title="Processos">
              <div className="grid grid-flow-col grid-cols-[182px_172px_174px] grid-rows-3 content-start pl-1">
                <SmallButton icon={<Docs />} text="Processar PEGs em Lote" />
                <SmallButton icon={<Clerk />} text="Digitação de Beneficiários" />
                <SmallButton icon={<ExportIcon />} text="Exportar Arq. Matriz Gerencial" />
                <SmallButton icon={<Translate />} text="Reapresentação de Eventos" />
                <SmallButton icon={<Heart />} text="Gerar Arquivo Previnne" />
                <SmallButton icon={<Gears size={16} />} text="Liberar Teto/Alçada" />
                <SmallButton icon={<DocCheck />} text="Conferência de Notas Fiscais" />
                <SmallButton icon={<Gears size={16} />} text="Monitor de Pagamentos" />
                <SmallButton icon={<Gears size={16} />} text="Detalhes da Nota Fiscal" />
              </div>
            </RibbonGroup>
          </>
        }
      />
    </div>
  );
}
